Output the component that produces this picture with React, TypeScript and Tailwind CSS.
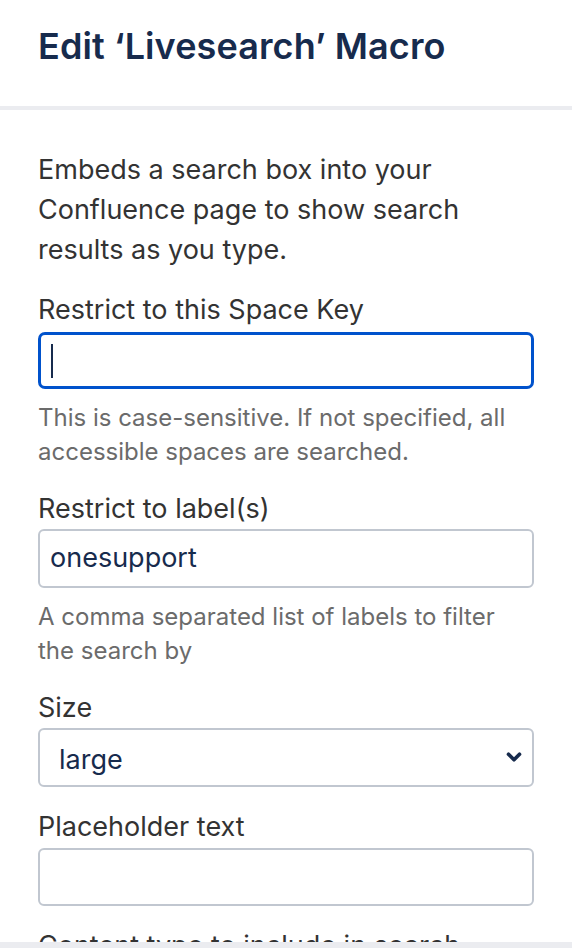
import { ChevronDown } from 'lucide-react';

const font = { fontFamily: 'Inter, "Noto Sans", sans-serif' };

function Label({ children }: { children: React.ReactNode }) {
  return <div className="text-[27px] leading-[40px] text-[#333333]">{children}</div>;
}

function Help({ children }: { children: React.ReactNode }) {
  return <div className="mt-3 text-[24px] leading-[34px] text-[#6b6b6b]">{children}</div>;
}

export default function App() {
  return (
    <div className="flex h-[948px] w-[572px] flex-col overflow-hidden bg-white" style={font}>
      {/* header */}
      <header className="flex h-[110px] flex-none items-start border-b-4 border-[#ebecf0] px-[38px] pt-[24px]">
        <h1 className="text-[36px] font-semibold leading-[44px] tracking-[0.1px] text-[#172b4d]">
          Edit ‘Livesearch’ Macro
        </h1>
      </header>

      <main className="flex-1 overflow-hidden px-[38px] pt-[40px]">
        <p className="text-[27px] leading-[40px] text-[#333333]">
          Embeds a search box into your Confluence page to show search results as you type.
        </p>

        <div className="mt-5">
          <Label>Restrict to this Space Key</Label>
          <div className="mt-[2px] flex h-[57px] items-center rounded-[7px] border-[3px] border-[#0052cc] px-[10px]">
            <span className="h-[34px] w-[2px] bg-[#172b4d]" />
          </div>
          <Help>This is case-sensitive. If not specified, all accessible spaces are searched.</Help>
        </div>

        <div className="mt-5">
          <Label>Restrict to label(s)</Label>
          <div className="flex h-[59px] items-center rounded-[6px] border-2 border-[#c1c7d0] px-[10px] text-[27px] text-[#172b4d]">
            onesupport
          </div>
          <Help>A comma separated list of labels to filter the search by</Help>
        </div>

        <div className="mt-5">
          <Label>Size</Label>
          <div className="flex h-[59px] items-center justify-between rounded-[6px] border-2 border-[#c1c7d0] pl-[19px] pr-[7px] pt-[6px] text-[27px] text-[#172b4d]">
            <span>large</span>
            <ChevronDown size={22} strokeWidth={4} className="-mt-[8px] text-[#172b4d]" />
          </div>
        </div>

        <div className="mt-5">
          <Label>Placeholder text</Label>
          <div className="mt-[1px] h-[58px] rounded-[6px] border-2 border-[#c1c7d0]" />
        </div>

        <div className="mt-5">
          <Label>Content type to include in search</Label>
        </div>
      </main>

      <footer className="h-[6px] flex-none bg-[#ebecf0]" />
    </div>
  );
}
